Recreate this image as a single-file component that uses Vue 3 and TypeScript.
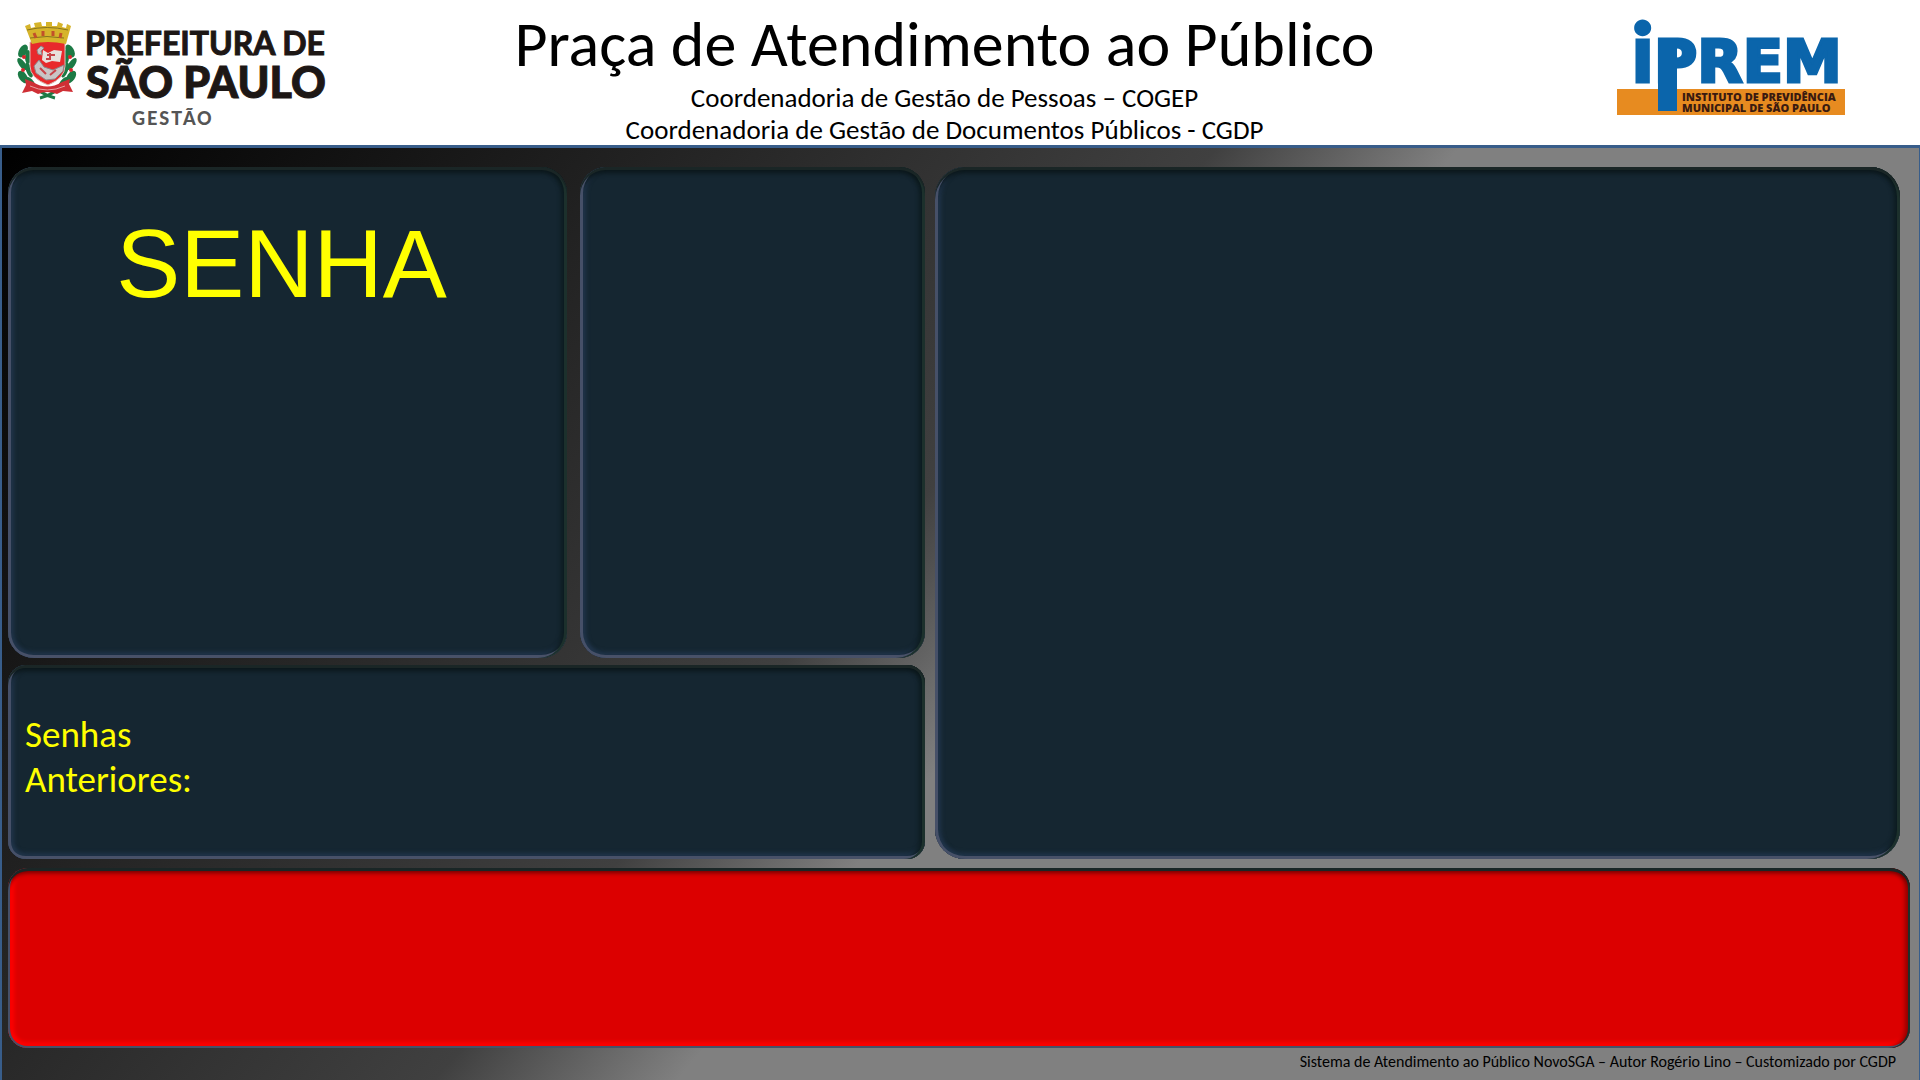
<script setup lang="ts">
const title = 'Praça de Atendimento ao Público'
const departments = [
  'Coordenadoria de Gestão de Pessoas – COGEP',
  'Coordenadoria de Gestão de Documentos Públicos - CGDP',
]
const credits = 'Sistema de Atendimento ao Público NovoSGA – Autor Rogério Lino – Customizado por CGDP'
</script>

<template>
  <div class="page">
    <header class="header">
      <svg class="logo-city" width="312" height="112" viewBox="0 0 312 112" role="img" aria-label="Prefeitura de São Paulo - Gestão">
        <!-- laurel branches -->
        <g fill="#1c7a45">
          <ellipse cx="6" cy="29" rx="4" ry="7" transform="rotate(30 6 29)" />
          <ellipse cx="5" cy="42" rx="3" ry="7" transform="rotate(-35 5 42)" />
          <ellipse cx="6" cy="55" rx="4" ry="7" transform="rotate(-35 6 55)" />
          <ellipse cx="11" cy="35" rx="3" ry="7" />
          <ellipse cx="12" cy="48" rx="3" ry="8" transform="rotate(-20 12 48)" />
          <ellipse cx="14" cy="61" rx="3" ry="7" transform="rotate(-35 14 61)" />
          <ellipse cx="53" cy="29" rx="4" ry="7" transform="rotate(-30 53 29)" />
          <ellipse cx="55" cy="42" rx="3" ry="7" transform="rotate(35 55 42)" />
          <ellipse cx="54" cy="55" rx="4" ry="7" transform="rotate(35 54 55)" />
          <ellipse cx="49" cy="35" rx="3" ry="7" />
          <ellipse cx="48" cy="48" rx="3" ry="8" transform="rotate(20 48 48)" />
          <ellipse cx="46" cy="61" rx="3" ry="7" transform="rotate(35 46 61)" />
        </g>
        <g fill="#d8262c">
          <circle cx="7" cy="35" r="2" /><circle cx="6" cy="48" r="2" />
          <circle cx="53" cy="35" r="2" /><circle cx="54" cy="48" r="2" />
        </g>
        <path d="M23 76q8-2 14-6M38 76q-8-2-14-6" stroke="#1c7a45" stroke-width="3" fill="none" />
        <!-- ribbon -->
        <path d="M8 57l8 3q14 9 29 0l8-3-1 5 4 8-10-1-6 3q-10-4-19 0l-6-3-10 2 4-8z" fill="#cf2f35" />
        <path d="M13 64q17 8 35 0" fill="none" stroke="#e9a0a0" stroke-width="1" />
        <!-- shield -->
        <path d="M13 20q17-3 35 0v24q0 12-17 19Q13 56 13 44z" fill="#e8292c" stroke="#d9c0b8" stroke-width="1" />
        <path d="M25 38l1-10 5 3 6-3 8 1-2 11-8-1-6 2z" fill="#e8e0dc" />
        <path d="M20 28l4-4 3 2-3 3 1 4-4-1zM17 44l5-6 5 7 9 3 11-5-1 6-8 8-9 1-10-7z" fill="#c9c5c5" stroke="#8f8588" stroke-width="1" />
        <path d="M30 33h8M33 31v7M29 37h4M23 46l6 6M33 53l6-5" stroke="#c84348" stroke-width="2" fill="none" />
        <!-- mural crown -->
        <path d="M8 4l5-2 1 4 4-1-1-4 7-1 1 4h4V0h6v4l5 0 1-4 5 2-1 3 4 1 1-4 4 2-5 18q-19-4-34 0z" fill="#d6b42b" />
        <path d="M10 8q20-5 41 0M13 16q17-3 34 0" stroke="#86731d" stroke-width="1" fill="none" />
        <path d="M17 11l2 5M26 9v5M36 9v5M44 11l-1 5" stroke="#c2502a" stroke-width="3" />
        <text x="68" y="33" class="city-line">PREFEITURA DE</text>
        <text x="69" y="76" class="city-name">SÃO PAULO</text>
        <text x="115" y="103" class="city-unit">GESTÃO</text>
      </svg>

      <div class="heading">
        <h1>{{ title }}</h1>
        <p v-for="department in departments" :key="department">{{ department }}</p>
      </div>

      <svg class="logo-iprem" width="230" height="120" viewBox="0 0 230 120" role="img" aria-label="IPREM - Instituto de Previdência Municipal de São Paulo">
        <rect x="1" y="89" width="228" height="26" fill="#e78b20" />
        <text x="16" y="82" class="iprem-i">i</text>
        <text x="38" y="82" class="iprem-name">PREM</text>
        <rect x="42" y="39" width="19" height="72" fill="#0b65ab" />
        <text x="66" y="101" class="iprem-sub">INSTITUTO DE PREVIDÊNCIA</text>
        <text x="66" y="112" class="iprem-sub">MUNICIPAL DE SÃO PAULO</text>
      </svg>
    </header>

    <main class="board">
      <div class="upper">
        <div class="calls">
          <div class="current">
            <section class="panel ticket"><h2>SENHA</h2></section>
            <section class="panel counter"></section>
          </div>
          <section class="panel previous">
            <h3>Senhas<br />Anteriores:</h3>
          </section>
        </div>
        <section class="panel media"></section>
      </div>
      <section class="panel notice"></section>
      <footer>{{ credits }}</footer>
    </main>
  </div>
</template>

<style>
body {
  margin: 0;
}
</style>

<style scoped>
.page {
  display: grid;
  grid-template-rows: 145px minmax(0, 1fr);
  height: 100vh;
  min-height: 640px;
  background: #fff;
  color: #000;
  font-family: Carlito, Lato, sans-serif;
}

.header {
  display: grid;
  grid-template-columns: 1fr auto 1fr;
  align-items: start;
  padding: 0 48px 0 17px;
}

.logo-city {
  margin-top: 22px;
}

.logo-iprem {
  justify-self: end;
  margin-right: 26px;
}

.city-line {
  font: 700 32px Lato, sans-serif;
  fill: #1d1715;
  stroke: #1d1715;
  stroke-width: 1px;
}

.city-name {
  font: 900 43px Lato, sans-serif;
  fill: #1d1715;
  stroke: #1d1715;
  stroke-width: 1px;
}

.city-unit {
  font: 900 18px Lato, sans-serif;
  letter-spacing: 2px;
  fill: #555;
}

.iprem-i {
  font: 900 82px Lato, sans-serif;
  fill: #0b65ab;
  stroke: #0b65ab;
  stroke-width: 3px;
}

.iprem-name {
  font: 700 59px "DejaVu Sans", sans-serif;
  fill: #0b65ab;
  stroke: #0b65ab;
  stroke-width: 3px;
}

.iprem-sub {
  font: 800 11px "Open Sans", sans-serif;
  fill: #3a1a10;
}

.heading {
  text-align: center;
}

.heading h1 {
  margin: 6px 0 0;
  font-size: 64px;
  line-height: 76px;
  font-weight: 400;
}

.heading p {
  margin: 0;
  font-size: 27px;
  line-height: 32px;
}

.board {
  display: grid;
  grid-template-rows: minmax(0, 692fr) minmax(0, 180fr) auto;
  row-gap: 9px;
  padding: 19px 9px 0 6px;
  border: solid #385d8a;
  border-width: 3px 1px 0 2px;
  background: linear-gradient(130deg, #000 0%, #404040 45%, #808080 54%);
}

.upper {
  display: grid;
  grid-template-columns: minmax(0, 917fr) minmax(0, 965fr);
  column-gap: 10px;
  margin-right: 10px;
}

.calls {
  display: grid;
  grid-template-rows: minmax(0, 491fr) minmax(0, 194fr);
  row-gap: 7px;
}

.current {
  display: grid;
  grid-template-columns: minmax(0, 559fr) minmax(0, 345fr);
  column-gap: 13px;
}

/* Sunken bevel: a crisp rim on each side over a soft inner shade */
.panel {
  box-sizing: border-box;
  border-radius: 26px;
  background: #152631;
  box-shadow:
    inset 0 3px 0 #1a2626,
    inset -3px 0 0 #1c302c,
    inset 3px 0 0 #465068,
    inset 0 -3px 0 #485168,
    inset 0 7px 4px -1px #0b171b,
    inset -7px 0 4px -1px #0d1c20,
    inset 7px 0 4px -1px #20344a,
    inset 0 -7px 4px -1px #20344a;
}

.previous {
  display: flex;
  align-items: center;
  padding: 0 17px;
  border-radius: 18px;
}

.media {
  border-radius: 30px;
}

.notice {
  border-radius: 20px;
  background: #dc0000;
  box-shadow:
    inset 0 3px 0 #1a2626,
    inset -2px 0 0 #1c302c,
    inset 2px 0 0 #465068,
    inset 0 -2px 0 #485168,
    inset 0 6px 4px -1px #700000,
    inset -6px 0 4px -1px #900000,
    inset 7px 0 4px -1px #ff0000,
    inset 0 -7px 4px -1px #ff0000;
}

.ticket {
  padding: 42px 12px 0 0;
}

.ticket h2 {
  margin: 0;
  font: 400 96px/110px "Liberation Sans", Arial, sans-serif;
  text-align: center;
  color: #ff0;
}

.previous h3 {
  margin: 0;
  padding-bottom: 10px;
  font-size: 37px;
  line-height: 45px;
  font-weight: 400;
  color: #ff0;
}

footer {
  margin-top: -9px;
  padding: 2px 14px 6px 0;
  font-size: 16px;
  line-height: 24px;
  text-align: right;
}
</style>
